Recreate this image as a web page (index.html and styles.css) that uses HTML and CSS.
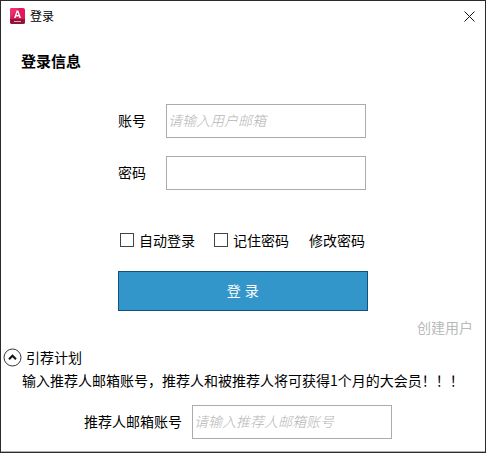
FILE: index.html
```html
<!DOCTYPE html>
<html lang="zh-CN">
<head>
    <meta charset="UTF-8">
    <meta name="viewport" content="width=device-width, initial-scale=1.0">
    <title>登录</title>
    <link rel="stylesheet" href="styles.css">
</head>
<body>
    <div class="window">
        <div class="titlebar">
            <svg class="app-icon" width="15" height="16" viewBox="0 0 15 16">
                <rect x="0" y="0" width="15" height="16" rx="2" fill="#e2185a"/>
                <path d="M0 2 Q0 0 2 0 H9 L0 10 Z" fill="#ee2f6c"/>
                <path d="M0 11 H15 V14 Q15 16 13 16 H2 Q0 16 0 14 Z" fill="#8e1539"/>
                <path d="M4 10 L6.6 2.5 H8.4 L11 10 H9.4 L8.9 8.4 H6.1 L5.6 10 Z M6.5 7.1 H8.5 L7.5 4.3 Z" fill="#fff" fill-rule="evenodd"/>
                <rect x="4" y="13" width="7" height="1" fill="#d9a3b5"/>
            </svg>
            <span class="title">登录</span>
            <svg class="close" width="11" height="11" viewBox="0 0 11 11">
                <path d="M0.5 0.5 L10.5 10.5 M10.5 0.5 L0.5 10.5" stroke="#111" stroke-width="1" fill="none"/>
            </svg>
        </div>

        <h1>登录信息</h1>

        <div class="form">
            <div class="form-row">
                <label class="field-label">账号</label>
                <div class="input placeholder">请输入用户邮箱</div>
            </div>
            <div class="form-row">
                <label class="field-label">密码</label>
                <div class="input"></div>
            </div>

            <div class="options">
                <label class="check"><span class="box"></span>自动登录</label>
                <label class="check"><span class="box"></span>记住密码</label>
                <span class="link">修改密码</span>
            </div>

            <button class="login-button">登 录</button>
        </div>

        <div class="create-user">创建用户</div>

        <div class="referral-head">
            <svg width="19" height="19" viewBox="0 0 19 19">
                <circle cx="9.5" cy="9.5" r="8.5" fill="none" stroke="#333" stroke-width="1"/>
                <path d="M6 11.2 L9.5 7.7 L13 11.2" fill="none" stroke="#111" stroke-width="2"/>
            </svg>
            <span class="referral-title">引荐计划</span>
        </div>
        <p class="referral-text">输入推荐人邮箱账号，推荐人和被推荐人将可获得1个月的大会员！！！</p>
        <div class="referral-row">
            <label class="referral-label">推荐人邮箱账号</label>
            <div class="input placeholder">请输入推荐人邮箱账号</div>
        </div>
    </div>
</body>
</html>
```

FILE: styles.css
```css
* {
    box-sizing: border-box;
}

html, body {
    margin: 0;
    padding: 0;
}

body {
    font-family: "Noto Sans CJK SC", "Liberation Sans", sans-serif;
    font-size: 14px;
    color: #000;
    background-color: #fff;
}

.window {
    width: 486px;
    height: 453px;
    border: 1px solid #2b2b2b;
    box-shadow: inset 0 -1px 0 #b0b0b0;
    overflow: hidden;
}

.titlebar {
    display: flex;
    align-items: center;
    height: 30px;
    padding: 0 10px 0 9px;
}

.title {
    margin-left: 5px;
    padding-bottom: 2px;
    font-size: 12px;
}

.close {
    margin-left: auto;
}

h1 {
    margin: 12px 0 0 20px;
    font-size: 15px;
    line-height: 36px;
    height: 36px;
    font-weight: bold;
}

.form {
    margin-top: 25px;
    margin-left: 117px;
    width: 250px;
}

.form-row {
    display: flex;
    align-items: center;
    height: 34px;
    margin-bottom: 18px;
}

.field-label {
    width: 48px;
    padding-bottom: 2px;
}

.input {
    width: 200px;
    height: 34px;
    border: 1px solid #ababab;
    background-color: #fff;
}

.placeholder {
    padding-left: 1px;
    font-size: 14px;
    font-weight: 300;
    line-height: 31px;
    font-style: italic;
    color: #b6b6b6;
}

.options {
    display: flex;
    align-items: center;
    margin-top: 42px;
    height: 16px;
    padding-left: 2px;
}

.check {
    display: flex;
    align-items: center;
    margin-right: 18px;
    line-height: 14px;
}

.box {
    width: 14px;
    height: 14px;
    margin-right: 5px;
    border: 1px solid #444;
}

.check:first-child {
    margin-right: 19px;
}

.link {
    margin-left: 2px;
    line-height: 14px;
}

.login-button {
    display: block;
    width: 250px;
    height: 40px;
    margin-top: 23px;
    padding: 0 0 2px;
    border: 1px solid #13547e;
    background-color: #3296ca;
    color: #fff;
    font-family: inherit;
    font-size: 14px;
    letter-spacing: 0.5px;
}

.create-user {
    margin-top: 7px;
    padding-right: 12px;
    height: 20px;
    line-height: 19px;
    text-align: right;
    color: #b9b9b9;
}

.referral-head {
    display: flex;
    align-items: center;
    gap: 4px;
    margin-top: 10px;
    margin-left: 2px;
    height: 19px;
}

.referral-title {
    padding-bottom: 2px;
}

.referral-text {
    margin: 3px 0 0 21px;
    height: 20px;
    line-height: 20px;
    white-space: nowrap;
}

.referral-row {
    display: flex;
    align-items: center;
    gap: 10px;
    margin-top: 15px;
    margin-left: 83px;
}

.referral-label {
    padding-bottom: 2px;
}
```
